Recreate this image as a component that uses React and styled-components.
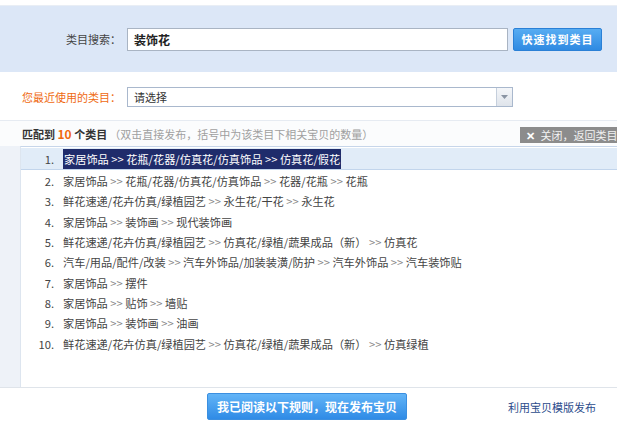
import React from "react";
import styled, { createGlobalStyle } from "styled-components";

const GlobalStyle = createGlobalStyle`
  body {
    margin: 0;
    background: #fff;
    font-family: "Noto Sans CJK SC", "Liberation Sans", sans-serif;
    font-size: 12px;
    color: #333;
  }
`;

const categories = [
  ["家居饰品", "花瓶/花器/仿真花/仿真饰品", "仿真花/假花"],
  ["家居饰品", "花瓶/花器/仿真花/仿真饰品", "花器/花瓶", "花瓶"],
  ["鲜花速递/花卉仿真/绿植园艺", "永生花/干花", "永生花"],
  ["家居饰品", "装饰画", "现代装饰画"],
  ["鲜花速递/花卉仿真/绿植园艺", "仿真花/绿植/蔬果成品（新）", "仿真花"],
  ["汽车/用品/配件/改装", "汽车外饰品/加装装潢/防护", "汽车外饰品", "汽车装饰贴"],
  ["家居饰品", "摆件"],
  ["家居饰品", "贴饰", "墙贴"],
  ["家居饰品", "装饰画", "油画"],
  ["鲜花速递/花卉仿真/绿植园艺", "仿真花/绿植/蔬果成品（新）", "仿真绿植"],
];

function App() {
  return (
    <>
      <GlobalStyle />
      <Page>
        <SearchPanel>
          <Label>类目搜索：</Label>
          <SearchInput>装饰花</SearchInput>
          <FindButton>快速找到类目</FindButton>
        </SearchPanel>

        <RecentRow>
          <Label $accent>您最近使用的类目：</Label>
          <Select>
            <span>请选择</span>
            <Arrow>
              <svg width="7" height="4" viewBox="0 0 7 4">
                <path d="M0 0h7L3.5 4z" fill="#8a94a3" />
              </svg>
            </Arrow>
          </Select>
        </RecentRow>

        <MatchSection>
          <MatchHeader>
            <Title>
              匹配到 <Count>10</Count> 个类目
              <Hint>（双击直接发布，括号中为该类目下相关宝贝的数量）</Hint>
            </Title>
            <CloseButton>
              <b>✕</b> 关闭，返回类目
            </CloseButton>
          </MatchHeader>
          <MatchBody>
            <Gutter />
            <List>
              {categories.map((path, i) => (
                <Row key={i} $active={i === 0}>
                  <Num>{i + 1}.</Num>
                  <Path $active={i === 0}>
                    {path.map((part, j) => (
                      <React.Fragment key={j}>
                        {j > 0 && <Sep $active={i === 0}> &gt;&gt; </Sep>}
                        {part}
                      </React.Fragment>
                    ))}
                  </Path>
                </Row>
              ))}
            </List>
          </MatchBody>
        </MatchSection>

        <Footer>
          <PublishButton>我已阅读以下规则，现在发布宝贝</PublishButton>
          <TemplateLink>利用宝贝模版发布</TemplateLink>
        </Footer>
      </Page>
    </>
  );
}

const Page = styled.div`
  width: 617px;
  height: 436px;
  overflow: hidden;
  padding-top: 5px;
  box-sizing: border-box;
`;

const SearchPanel = styled.div`
  height: 67px;
  background: #dce7f7;
  border-top: 1px solid #e9eef5;
  display: flex;
  align-items: center;
  box-sizing: border-box;
`;

const Label = styled.div`
  width: 121px;
  padding-right: 6px;
  text-align: right;
  font-size: 11px;
  color: ${(p) => (p.$accent ? "#ef6a12" : "#444")};
  white-space: nowrap;
`;

const SearchInput = styled.div`
  width: 381px;
  height: 23px;
  box-sizing: border-box;
  background: #fff;
  border: 1px solid #a9b4c3;
  padding-left: 6px;
  line-height: 21px;
  font-size: 12px;
  font-weight: bold;
  color: #222;
`;

const FindButton = styled.div`
  margin-left: 5px;
  width: 89px;
  height: 23px;
  box-sizing: border-box;
  border-radius: 2px;
  background: linear-gradient(#57acf2, #2f8ae2);
  border: 1px solid #2a80d6;
  color: #fff;
  font-size: 11px;
  font-weight: bold;
  letter-spacing: 1px;
  text-align: center;
  line-height: 21px;
`;

const RecentRow = styled.div`
  height: 48px;
  display: flex;
  align-items: center;
  padding-top: 2px;
  box-sizing: border-box;
`;

const Select = styled.div`
  width: 386px;
  height: 20px;
  box-sizing: border-box;
  border: 1px solid #a9b8cd;
  background: #fff;
  display: flex;
  align-items: center;
  justify-content: space-between;
  padding-left: 6px;
  font-size: 11px;
  color: #333;
`;

const Arrow = styled.div`
  width: 15px;
  height: 18px;
  border-left: 1px solid #c5cfdc;
  background: linear-gradient(#f4f6f9, #dfe4eb);
  display: flex;
  align-items: center;
  justify-content: center;
`;

const MatchSection = styled.div`
  border-top: 1px solid #e6ebf2;
  background: #fbfcfd;
`;

const MatchHeader = styled.div`
  height: 25px;
  display: flex;
  align-items: center;
  justify-content: space-between;
  padding-left: 22px;
`;

const Title = styled.div`
  font-size: 11px;
  font-weight: bold;
  color: #333;
  white-space: nowrap;
`;

const Count = styled.span`
  color: #f06a10;
  font-size: 12px;
`;

const Hint = styled.span`
  font-weight: normal;
  color: #a0a0a0;
  margin-left: 2px;
`;

const CloseButton = styled.div`
  width: 97px;
  height: 16px;
  background: #8c8c8c;
  color: #f2f2f2;
  font-size: 11px;
  line-height: 16px;
  padding-left: 6px;
  white-space: nowrap;
  overflow: hidden;
  box-sizing: border-box;
  margin-top: 2px;

  b {
    color: #fff;
    margin-right: 3px;
  }
`;

const MatchBody = styled.div`
  display: flex;
  height: 241px;
`;

const Gutter = styled.div`
  width: 20px;
  background: #eef2f8;
`;

const List = styled.div`
  flex: 1;
  background: #fff;
  border-top: 1px solid #c7d6ea;
  border-left: 1px solid #dde5ef;
  padding-top: 1px;
`;

const Row = styled.div`
  height: ${(p) => (p.$active ? "21px" : "20.3px")};
  display: flex;
  align-items: center;
  white-space: nowrap;
  font-size: 11.2px;
  background: ${(p) => (p.$active ? "#e1ecf8" : "transparent")};
  border-bottom: ${(p) => (p.$active ? "1px solid #c2d5ec" : "none")};
  margin-bottom: ${(p) => (p.$active ? "1px" : "0")};
`;

const Num = styled.span`
  width: 33px;
  text-align: right;
  margin-right: 9px;
  color: #444;
`;

const Path = styled.span`
  color: ${(p) => (p.$active ? "#fff" : "#444")};
  background: ${(p) => (p.$active ? "#1f2c6b" : "transparent")};
  padding: ${(p) => (p.$active ? "2px 1px" : "0")};
`;

const Sep = styled.span`
  color: ${(p) => (p.$active ? "#fff" : "#8a8a8a")};
`;

const Footer = styled.div`
  border-top: 1px solid #dfe4ea;
  height: 48px;
  display: flex;
  align-items: flex-start;
  padding-top: 5px;
  padding-left: 207px;
  box-sizing: border-box;
`;

const PublishButton = styled.div`
  width: 200px;
  height: 27px;
  box-sizing: border-box;
  border-radius: 2px;
  background: linear-gradient(#62b4f7, #2f8be6);
  border: 1px solid #3b8fe0;
  color: #fff;
  font-size: 12px;
  font-weight: bold;
  text-align: center;
  line-height: 25px;
  white-space: nowrap;
`;

const TemplateLink = styled.a`
  margin-left: 101px;
  margin-top: 6px;
  font-size: 11px;
  color: #2c4c8c;
  white-space: nowrap;
`;

export default App;
